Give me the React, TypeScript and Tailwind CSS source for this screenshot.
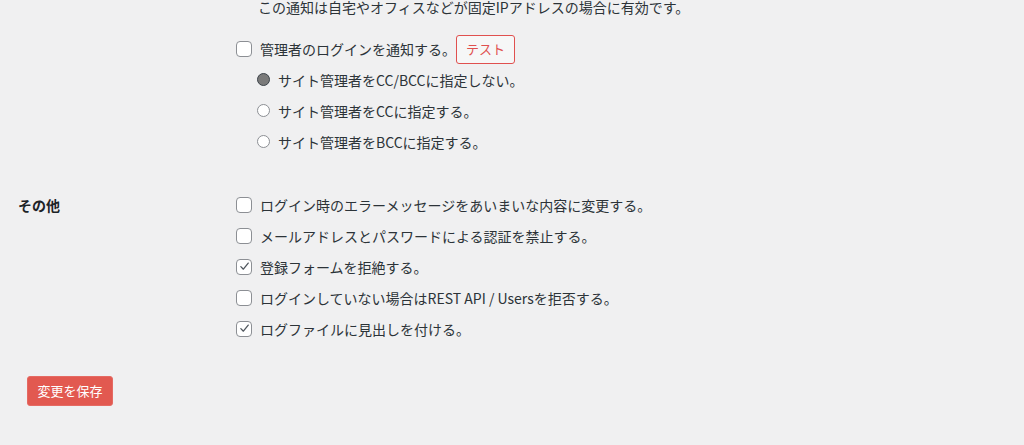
import { ReactNode } from 'react';

const font = { fontFamily: '"Noto Sans CJK JP", "Noto Sans", sans-serif' };

function Checkbox({ checked = false }: { checked?: boolean }) {
  return (
    <span className="flex h-4 w-4 shrink-0 items-center justify-center rounded-[4px] border border-[#8c8f94] bg-white">
      {checked && (
        <svg viewBox="0 0 16 16" className="h-[13px] w-[13px]">
          <path d="M3.5 8.2 L6.6 11.3 L12.6 3.8" fill="none" stroke="#50575e" strokeWidth="1.6" strokeLinecap="round" strokeLinejoin="round" />
        </svg>
      )}
    </span>
  );
}

function Radio({ checked = false }: { checked?: boolean }) {
  return (
    <span
      className={`flex h-[13px] w-[13px] shrink-0 items-center justify-center rounded-full border ${
        checked ? 'border-[#3c434a] bg-[#7a7a7a]' : 'border-[#8c8f94] bg-white'
      }`}
    />
  );
}

function CheckRow({ checked, children }: { checked?: boolean; children: ReactNode }) {
  return (
    <div className="flex h-[31px] items-center gap-2">
      <Checkbox checked={checked} />
      <span>{children}</span>
    </div>
  );
}

function RadioRow({ checked, children }: { checked?: boolean; children: ReactNode }) {
  return (
    <div className="flex h-[31px] items-center gap-2">
      <Radio checked={checked} />
      <span>{children}</span>
    </div>
  );
}

export default function App() {
  return (
    <div className="h-[445px] w-full overflow-hidden bg-[#f0f0f1] text-[14px] leading-5 text-[#2c3338]" style={font}>
      {/* Notification section */}
      <div className="grid grid-cols-[236px_1fr]">
        <div />
        <div>
          <p className="-mt-[3px] pl-[22px]">この通知は自宅やオフィスなどが固定IPアドレスの場合に有効です。</p>
          <div className="mt-[17px] flex h-[30px] items-center gap-2">
            <Checkbox />
            <span>管理者のログインを通知する。</span>
            <button className="-ml-[8px] h-[29px] w-[59px] rounded-[3px] border border-[#e0504f] bg-[#f6f7f7] text-[13px] text-[#e0504f]">
              テスト
            </button>
          </div>
          <div className="pl-[21px]">
            <RadioRow checked>サイト管理者をCC/BCCに指定しない。</RadioRow>
            <RadioRow>サイト管理者をCCに指定する。</RadioRow>
            <RadioRow>サイト管理者をBCCに指定する。</RadioRow>
          </div>
        </div>
      </div>

      {/* Other section */}
      <div className="mt-[32px] grid grid-cols-[236px_1fr]">
        <div className="flex h-[31px] items-center pl-[18px] font-bold text-[#1d2327]">その他</div>
        <div>
          <CheckRow>ログイン時のエラーメッセージをあいまいな内容に変更する。</CheckRow>
          <CheckRow>メールアドレスとパスワードによる認証を禁止する。</CheckRow>
          <CheckRow checked>登録フォームを拒絶する。</CheckRow>
          <CheckRow>ログインしていない場合はREST API / Usersを拒否する。</CheckRow>
          <CheckRow checked>ログファイルに見出しを付ける。</CheckRow>
        </div>
      </div>

      <div className="mt-[32px] pl-[27px]">
        <button className="h-[30px] w-[86px] rounded-[3px] border border-[#e56a63] bg-[#e25950] text-[13px] text-white">
          変更を保存
        </button>
      </div>
    </div>
  );
}
